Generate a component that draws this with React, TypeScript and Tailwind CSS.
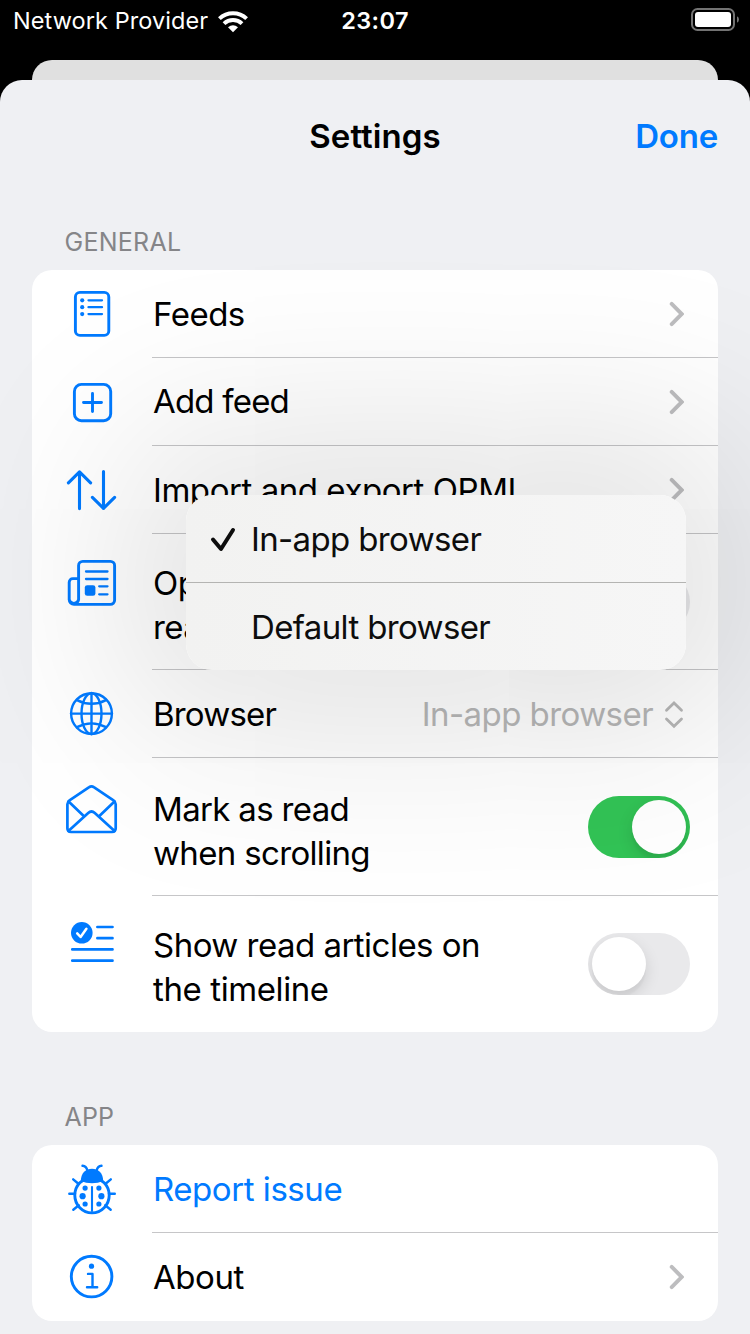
import type { ReactNode } from "react";

const fontStack = "font-['Inter','Liberation_Sans',sans-serif]";

function Icon({ box, height, children }: { box: string; height: number; children: ReactNode }) {
  return (
    <svg
      width={120}
      height={height}
      viewBox={box}
      className="shrink-0 text-[#007aff]"
      fill="none"
      stroke="currentColor"
      strokeWidth={2.9}
      strokeLinecap="round"
      strokeLinejoin="round"
    >
      {children}
    </svg>
  );
}

function Chevron() {
  return (
    <svg width={16} height={26} viewBox="0 0 16 26" className="mr-[34px] shrink-0" fill="none" stroke="#bdbdbf" strokeWidth={3.9} strokeLinecap="round" strokeLinejoin="miter">
      <path d="M3.7 2.9 13.8 13 3.7 23.1" />
    </svg>
  );
}

function Switch({ on }: { on: boolean }) {
  return (
    <span className={on ? "mr-7 flex h-[62px] w-[102px] shrink-0 justify-end overflow-hidden rounded-full bg-[#32c456] p-1" : "mr-7 flex h-[62px] w-[102px] shrink-0 overflow-hidden rounded-full bg-[#e9e9eb] p-1"}>
      <span className="size-[54px] rounded-full bg-white shadow-[0_6px_16px_rgba(0,0,0,0.12),0_6px_2px_rgba(0,0,0,0.03)]" />
    </span>
  );
}

function Row({ icon, children, className, last }: { icon: ReactNode; children: ReactNode; className: string; last?: boolean }) {
  return (
    <div className={`flex items-start ${className}`}>
      {icon}
      <div className={last ? "flex h-full flex-1 items-center justify-between" : "flex h-full flex-1 items-center justify-between border-b border-[#c6c6c8]"}>
        {children}
      </div>
    </div>
  );
}

function StatusBar() {
  return (
    <div className="flex h-[60px] items-start justify-between bg-black text-white">
      <div className="flex h-[41px] w-[300px] items-center pl-[13px]">
        <span className="whitespace-nowrap text-[23.5px] tracking-[0.08px]">Network Provider</span>
        <svg width={32} height={24} viewBox="0 0 32 24" className="ml-[8.5px]" fill="none" stroke="white" strokeWidth={4}>
          <path d="M2.4 9.6A20 20 0 0 1 29.6 9.6" />
          <path d="M7 14.6A13.2 13.2 0 0 1 25 14.6" />
          <path d="M11 18.3Q16 14.1 21 18.3L16 23.3Z" fill="white" stroke="none" />
        </svg>
      </div>
      <span className="flex h-[42px] items-center text-[23.5px] font-semibold tracking-[0.4px]">23:07</span>
      <div className="flex h-10 w-[300px] items-center justify-end pr-[10px]">
        <svg width={50} height={26} viewBox="0 0 50 26">
          <rect x="2" y="2" width="42" height="21" rx="5.5" fill="none" stroke="#737373" strokeWidth={2} />
          <rect x="5" y="5" width="36" height="15" rx="3" fill="white" />
          <path d="M47 9.3Q49 10.3 49 12.5T47 15.7Z" fill="#737373" />
        </svg>
      </div>
    </div>
  );
}

function BrowserMenu() {
  return (
    <div className="absolute left-[154px] top-[225px] z-10 h-[175px] w-[500px] overflow-visible rounded-[26px] bg-linear-to-r from-[#f2f2f1] to-[#f6f6f6] text-[33px] text-[#0d0d0d] shadow-[0_0_190px_60px_rgba(0,8,0,0.125)]">
      <div className="flex h-[88px] items-center border-b border-[#b4b4b2]">
        <svg width={64} height={40} viewBox="0 0 64 40" fill="none" stroke="currentColor" strokeWidth={4} strokeLinecap="round" strokeLinejoin="round">
          <path d="M27 20.5 35 30 47 11" />
        </svg>
        <span className="pl-px tracking-[-0.64px]">In-app browser</span>
      </div>
      <div className="flex h-[87px] items-center pl-[65px]">
        <span className="tracking-[-0.64px]">Default browser</span>
      </div>
    </div>
  );
}

export default function App() {
  return (
    <div className={`flex h-[1334px] w-[750px] flex-col overflow-hidden bg-black text-black ${fontStack}`}>
      <StatusBar />
      <div className="mx-8 h-5 shrink-0 rounded-t-[20px] bg-[#e0e0e0]" />
      <main className="flex flex-1 flex-col rounded-t-[22px] bg-[#eff0f3]">
        <header className="grid h-28 grid-cols-3 items-center px-8 pt-0.5 text-[33px]">
          <span />
          <h1 className="text-center font-semibold tracking-[0.05px]">Settings</h1>
          <span className="text-right font-semibold tracking-[-0.2px] text-[#007aff]">Done</span>
        </header>

        <h2 className="mt-[30px] h-10 pl-[64.5px] text-[25px] leading-10 tracking-[0.25px] text-[#858588]">GENERAL</h2>

        <section className="relative mx-8 mt-2 h-[762px] rounded-[20px] bg-white text-[33px] leading-[44px]">
          <Row
            className="h-[88px]"
            icon={
              <Icon box="32 270 120 88" height={88}>
                <rect x="75.4" y="292.4" width="33.4" height="43" rx="4.5" />
                <path d="M88.5 300.3H102M88.5 307.2H102M88.5 314.1H102" strokeWidth={2.3} />
                <g fill="currentColor" stroke="none">
                  <circle cx="82.2" cy="300.3" r="2.1" />
                  <circle cx="82.2" cy="307.2" r="2.1" />
                  <circle cx="82.2" cy="314.1" r="2.1" />
                </g>
              </Icon>
            }
          >
            <span className="pl-px tracking-[-0.5px]">Feeds</span>
            <Chevron />
          </Row>
          <Row
            className="h-[88px]"
            icon={
              <Icon box="32 358 120 88" height={88}>
                <rect x="74.4" y="384.4" width="36.3" height="36.3" rx="7" />
                <path d="M92.5 393.5V411.5M83.5 402.5H101.5" />
              </Icon>
            }
          >
            <span className="pb-0.5 pl-px tracking-[-0.8px]">Add feed</span>
            <Chevron />
          </Row>
          <Row
            className="h-[88px]"
            icon={
              <Icon box="32 446 120 88" height={88}>
                <path d="M79.5 508.6V471.8M68.4 482.8 79.5 471.8 90.6 482.8M103.5 471.5V508.4M92.4 497.4 103.5 508.4 114.6 497.4" strokeWidth={3.1} />
              </Icon>
            }
          >
            <span className="pl-px tracking-[-0.45px]">Import and export OPML</span>
            <Chevron />
          </Row>
          <Row
            className="h-[136px]"
            icon={
              <Icon box="32 534 120 88" height={88}>
                <path d="M74 604.4H110.4a4.2 4.2 0 0 0 4.2-4.2V565.6a4.2 4.2 0 0 0-4.2-4.2H82.8a4.2 4.2 0 0 0-4.2 4.2V599.6a4.8 4.8 0 0 1-9.4 0V582.2a3.6 3.6 0 0 1 3.6-3.6H78.6M69.2 599.6a4.8 4.8 0 0 0 4.8 4.8" />
                <path d="M86 571.5H107.5M86 579H107.5M99.2 586.3H107.5M99.2 594.3H107.5" strokeWidth={2.3} />
                <rect x="84.8" y="585.2" width="10.6" height="10.6" rx="2.4" fill="currentColor" stroke="none" />
              </Icon>
            }
          >
            <span className="pl-px pt-1.5 tracking-[-0.6px]">Open articles<br />reader</span>
            <Switch on={false} />
          </Row>
          <Row
            className="h-[88px]"
            icon={
              <Icon box="32 670 120 88" height={88}>
                <g strokeWidth={2.4}>
                  <circle cx="91.5" cy="713.6" r="20.4" />
                  <path d="M91.5 693V734M71 713.6H112" />
                  <ellipse cx="91.5" cy="713.6" rx="10" ry="20.4" />
                  <path d="M77 700.1Q91.5 707.5 106 700.1M77 727.1Q91.5 719.7 106 727.1" />
                </g>
              </Icon>
            }
          >
            <span className="pl-px tracking-[-0.8px]">Browser</span>
            <span className="mr-[33px] flex items-center text-[#b7b7b7]">
              <span className="tracking-[-0.56px]">In-app browser</span>
              <svg width={22} height={30} viewBox="0 0 22 30" className="ml-[10px]" fill="none" stroke="currentColor" strokeWidth={2.8} strokeLinecap="round" strokeLinejoin="miter">
                <path d="M3.5 11.2 11 4 18.5 11.2M3.5 20 11 27.2 18.5 20" />
              </svg>
            </span>
          </Row>
          <Row
            className="h-[138px]"
            icon={
              <Icon box="32 758 120 88" height={88}>
                <g strokeWidth={2.7}>
                  <path d="M67.4 804.2Q67.4 801.8 69.5 800.3L89.2 787.2Q91.5 785.5 93.8 787.2L113.5 800.3Q115.7 801.8 115.7 804.2V828.3Q115.7 832 112 832H71.1Q67.4 832 67.4 828.3Z" />
                  <path d="M68.6 801.5 84 816.2M114.5 801.5 99.1 816.2M68.7 830.8 88.2 813Q91.5 810 94.8 813L114.3 830.8" />
                </g>
              </Icon>
            }
          >
            <span className="pl-px pt-2 tracking-[-0.66px]">Mark as read<br />when scrolling</span>
            <Switch on />
          </Row>
          <Row
            className="h-[136px]"
            last
            icon={
              <Icon box="32 896 120 88" height={88}>
                <circle cx="81.8" cy="932.8" r="10.8" fill="currentColor" stroke="none" />
                <path d="M77.2 933.3 80.6 937 86.4 928.8" stroke="white" strokeWidth={2.5} />
                <path d="M97.4 927H112.5M97.4 938.2H112.5M72.3 949.4H112.5M72.3 960.7H112.5" strokeWidth={2.7} />
              </Icon>
            }
          >
            <span className="pl-px pt-1.5 tracking-[-0.52px]">Show read articles on<br /><span className="tracking-[-0.4px]">the timeline</span></span>
            <Switch on={false} />
          </Row>
          <BrowserMenu />
        </section>

        <h2 className="mt-[65px] h-10 pl-[64.5px] text-[25px] leading-10 tracking-[0.2px] text-[#858588]">APP</h2>

        <section className="mx-8 mt-2 h-44 shrink-0 rounded-[20px] bg-white text-[33px] leading-[44px]">
          <Row
            className="h-[88px]"
            icon={
              <Icon box="32 1145 120 88" height={88}>
                <ellipse cx="92" cy="1195.3" rx="17.2" ry="17.6" />
                <path d="M80.8 1181C80.8 1173 86 1168.8 92 1168.8S103.2 1173 103.2 1181Q98 1183.3 92 1183.3T80.8 1181Z" fill="currentColor" stroke="none" />
                <path d="M82.5 1165.8Q86.3 1166.2 87.3 1170.2M101.5 1165.8Q97.7 1166.2 96.7 1170.2M73.2 1179.3 78.7 1184M110.8 1179.3 105.3 1184M69.3 1193.7H75M109 1193.7H114.8M78.8 1205.3 73.3 1209.8M105.2 1205.3 110.7 1209.8" strokeWidth={2.4} />
                <path d="M92 1187V1211" strokeWidth={2.1} />
                <g fill="currentColor" stroke="none">
                  <circle cx="85.1" cy="1188.1" r="2.6" />
                  <circle cx="98.9" cy="1188.1" r="2.6" />
                  <circle cx="82.6" cy="1196.2" r="3.1" />
                  <circle cx="101.4" cy="1196.2" r="3.1" />
                  <circle cx="85.1" cy="1204" r="2.6" />
                  <circle cx="98.9" cy="1204" r="2.6" />
                </g>
              </Icon>
            }
          >
            <span className="pl-px tracking-[-0.45px] text-[#007aff]">Report issue</span>
          </Row>
          <Row
            className="h-[88px]"
            last
            icon={
              <Icon box="32 1233 120 88" height={88}>
                <circle cx="91.6" cy="1276.6" r="20.3" />
                <circle cx="91.5" cy="1266.2" r="2.6" fill="currentColor" stroke="none" />
                <path d="M88 1273.9H92.5V1287.3M87 1287.3H97.2" strokeWidth={2.4} />
              </Icon>
            }
          >
            <span className="pl-px tracking-[-0.45px]">About</span>
            <Chevron />
          </Row>
        </section>
      </main>
    </div>
  );
}
